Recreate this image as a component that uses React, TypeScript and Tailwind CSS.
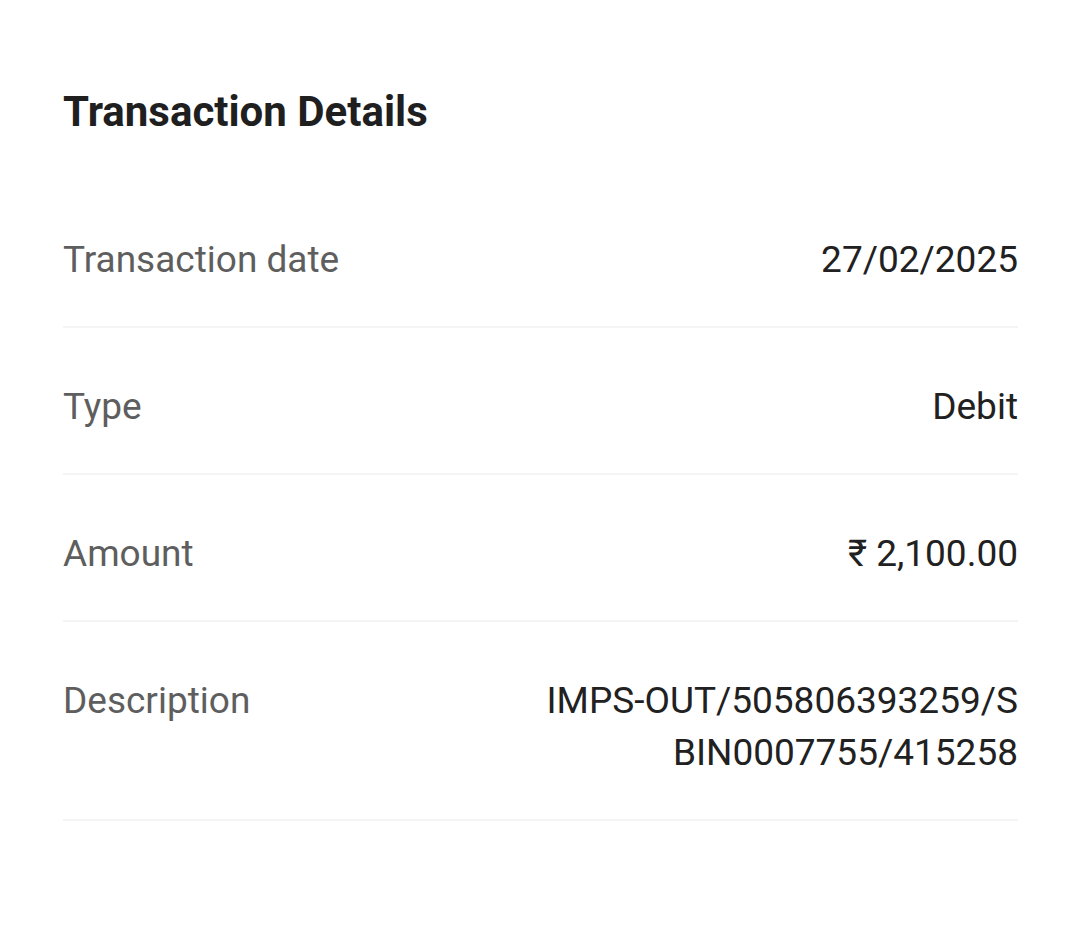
import React from "react";

const rows: { label: string; value: string }[] = [
  { label: "Transaction date", value: "27/02/2025" },
  { label: "Type", value: "Debit" },
  { label: "Amount", value: "₹ 2,100.00" },
  { label: "Description", value: "IMPS-OUT/505806393259/SBIN0007755/415258" },
];

const App: React.FC = () => {
  return (
    <div
      className="min-h-screen bg-white px-[63px] pt-[86px]"
      style={{ fontFamily: "Roboto, 'Noto Sans', sans-serif" }}
    >
      {/* Title */}
      <h1 className="text-[42px] leading-[52px] font-bold text-[#1f1f1f]">
        Transaction Details
      </h1>

      {/* Rows */}
      <div className="mt-[96px]">
        {rows.map((row, i) => (
          <div
            key={row.label}
            className={`flex items-start justify-between gap-8 border-b-2 border-[#f4f4f4] pb-[40px] ${
              i === 0 ? "pt-0" : "pt-[53px]"
            }`}
          >
            <span className="text-[37px] leading-[52px] text-[#5e5e5e] whitespace-nowrap">
              {row.label}
            </span>
            <span className="text-[37px] leading-[52px] text-[#212121] text-right max-w-[478px] break-all">
              {row.value}
            </span>
          </div>
        ))}
      </div>
    </div>
  );
};

export default App;
